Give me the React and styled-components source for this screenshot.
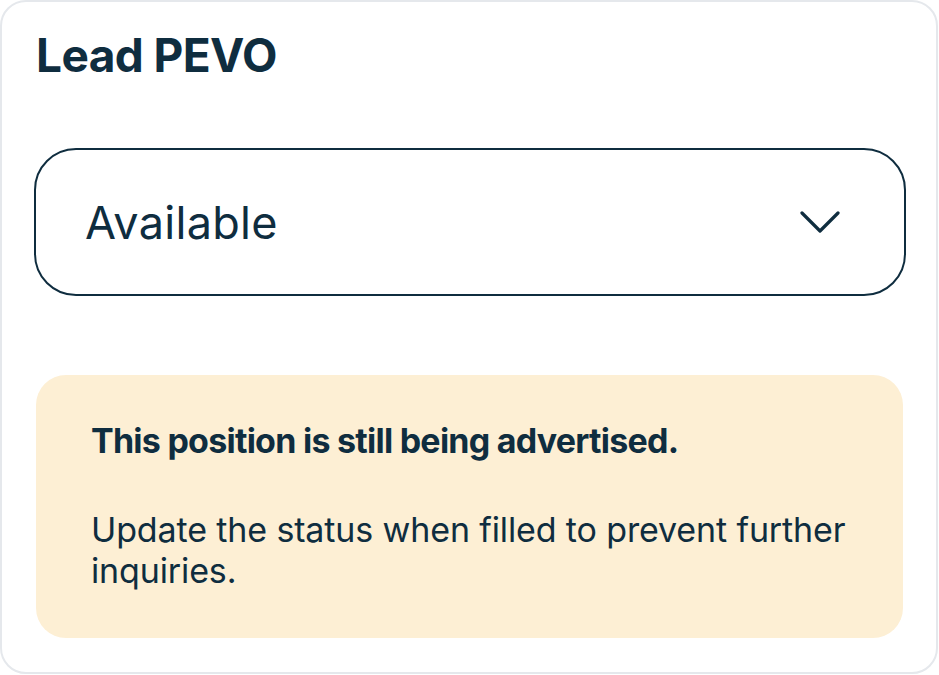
import styled, { createGlobalStyle } from "styled-components";

const GlobalStyle = createGlobalStyle`
    html, body {
        margin: 0;
        padding: 0;
        background: #ffffff;
    }
    body {
        font-family: Inter, "Noto Sans", sans-serif;
        color: #0f2d3f;
    }
`;

const Card = styled.div`
    box-sizing: border-box;
    width: 938px;
    height: 674px;
    border: 2px solid #e5e8ec;
    border-radius: 26px;
    padding: 22px 32px 0 32px;
    display: flex;
    flex-direction: column;
`;

const Title = styled.h2`
    margin: 0;
    font-size: 46px;
    font-weight: 700;
    line-height: 62px;
    letter-spacing: -0.6px;
    padding-left: 2px;
`;

const Select = styled.button`
    box-sizing: border-box;
    margin-top: 62px;
    width: 872px;
    height: 148px;
    border: 2.5px solid #0f2d3f;
    border-radius: 42px;
    background: #fff;
    display: flex;
    align-items: center;
    justify-content: space-between;
    padding: 0 64px 0 49px;
    font-family: inherit;
    color: inherit;
    font-size: 45px;
    font-weight: 400;
    letter-spacing: 0.3px;
    cursor: pointer;
`;

const Notice = styled.div`
    box-sizing: border-box;
    margin-top: 79px;
    margin-left: 2px;
    width: 867px;
    height: 263px;
    background: #fdefd4;
    border-radius: 30px;
    padding: 44px 55px 0 55px;
`;

const NoticeTitle = styled.p`
    margin: 0;
    font-size: 34px;
    font-weight: 700;
    line-height: 44px;
    letter-spacing: -0.75px;
`;

const NoticeText = styled.p`
    margin: 46px 0 0 0;
    font-size: 34px;
    font-weight: 400;
    line-height: 41px;
    letter-spacing: -0.13px;
`;

function Chevron() {
    return (
        <svg width="40" height="24" viewBox="0 0 40 24" fill="none">
            <path d="M2 3 L20 21 L38 3" stroke="#0f2d3f" strokeWidth="3.2" strokeLinecap="round" strokeLinejoin="round" />
        </svg>
    );
}

export default function App() {
    return (
        <>
            <GlobalStyle />
            <Card>
                <Title>Lead PEVO</Title>
                <Select type="button">
                    <span>Available</span>
                    <Chevron />
                </Select>
                <Notice>
                    <NoticeTitle>This position is still being advertised.</NoticeTitle>
                    <NoticeText>
                        Update the status when filled to prevent further inquiries.
                    </NoticeText>
                </Notice>
            </Card>
        </>
    );
}
